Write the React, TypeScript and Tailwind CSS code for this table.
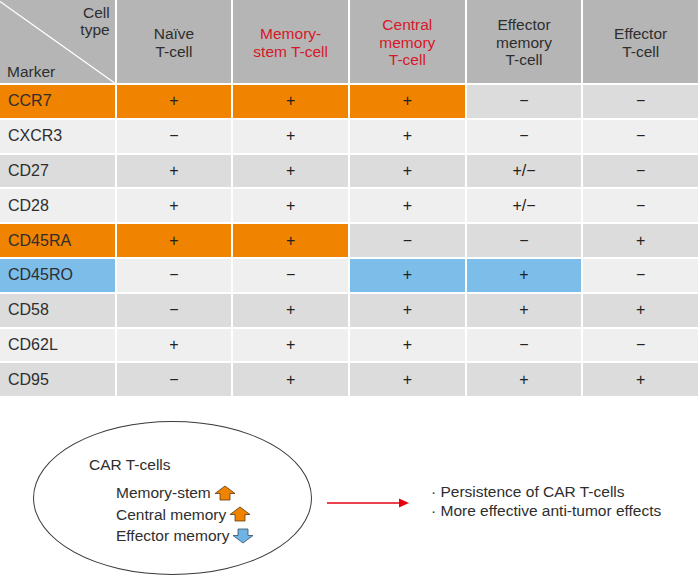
import React from "react";

type Tone = "orange" | "blue" | "light" | "dark";

interface MarkerRow {
  name: string;
  values: string[];
  base: "light" | "dark";
  // tones for [marker, naive, stem, central, effMem, eff]; undefined -> base
  tones?: Partial<Record<number, Tone>>;
}

const ROWS: MarkerRow[] = [
  { name: "CCR7", values: ["+", "+", "+", "−", "−"], base: "dark", tones: { 0: "orange", 1: "orange", 2: "orange", 3: "orange" } },
  { name: "CXCR3", values: ["−", "+", "+", "−", "−"], base: "light" },
  { name: "CD27", values: ["+", "+", "+", "+/−", "−"], base: "dark" },
  { name: "CD28", values: ["+", "+", "+", "+/−", "−"], base: "light" },
  { name: "CD45RA", values: ["+", "+", "−", "−", "+"], base: "dark", tones: { 0: "orange", 1: "orange", 2: "orange" } },
  { name: "CD45RO", values: ["−", "−", "+", "+", "−"], base: "light", tones: { 0: "blue", 3: "blue", 4: "blue" } },
  { name: "CD58", values: ["−", "+", "+", "+", "+"], base: "dark" },
  { name: "CD62L", values: ["+", "+", "+", "−", "−"], base: "light" },
  { name: "CD95", values: ["−", "+", "+", "+", "+"], base: "dark" },
];

const toneClass: Record<Tone, string> = {
  orange: "bg-[#f08300]",
  blue: "bg-[#7dbde9]",
  light: "bg-[#efefef]",
  dark: "bg-[#dcdcdc]",
};

function UpArrow() {
  return (
    <svg width="22" height="16" viewBox="0 0 22 16" className="shrink-0">
      <path
        d="M11 1 L21 8.5 L16 8.5 L16 15 L6 15 L6 8.5 L1 8.5 Z"
        fill="#f08300"
        stroke="#5b3b12"
        strokeWidth="0.8"
        strokeLinejoin="round"
      />
    </svg>
  );
}

function DownArrow() {
  return (
    <svg width="22" height="16" viewBox="0 0 22 16" className="shrink-0">
      <path
        d="M11 15 L21 7.5 L16 7.5 L16 1 L6 1 L6 7.5 L1 7.5 Z"
        fill="#6fb2e4"
        stroke="#34506b"
        strokeWidth="0.8"
        strokeLinejoin="round"
      />
    </svg>
  );
}

export default function App() {
  return (
    <div
      className="w-[698px] h-[578px] bg-white text-[#2e2e2e] overflow-hidden"
      style={{ fontFamily: '"Liberation Sans", Arial, sans-serif' }}
    >
      {/* Marker table */}
      <div className="grid grid-cols-6 gap-x-[2px] gap-y-[2px]">
        {/* Header */}
        <div className="relative h-[83px] bg-[#b5b5b5] flex flex-col justify-between text-[15.5px] leading-[17px]">
          <svg className="absolute inset-0" width="100%" height="100%" viewBox="0 0 115 83" preserveAspectRatio="none">
            <line x1="0" y1="1.5" x2="115" y2="83" stroke="#ffffff" strokeWidth="1.3" />
          </svg>
          <div className="relative text-right pr-[5px] pt-[4px]">
            Cell
            <br />
            type
          </div>
          <div className="relative pl-[7px] pb-[3px]">Marker</div>
        </div>
        <div className="h-[83px] bg-[#b5b5b5] flex items-center justify-center text-center text-[15.5px] leading-[17.5px] pt-[2px]">
          Naïve
          <br />
          T-cell
        </div>
        <div className="h-[83px] bg-[#b5b5b5] flex items-center justify-center text-center text-[15.5px] leading-[17.5px] pt-[2px] text-[#d7182a]">
          Memory-
          <br />
          stem T-cell
        </div>
        <div className="h-[83px] bg-[#b5b5b5] flex items-center justify-center text-center text-[15.5px] leading-[17.5px] pt-[2px] text-[#d7182a]">
          Central
          <br />
          memory
          <br />
          T-cell
        </div>
        <div className="h-[83px] bg-[#b5b5b5] flex items-center justify-center text-center text-[15.5px] leading-[17.5px] pt-[2px]">
          Effector
          <br />
          memory
          <br />
          T-cell
        </div>
        <div className="h-[83px] bg-[#b5b5b5] flex items-center justify-center text-center text-[15.5px] leading-[17.5px] pt-[2px]">
          Effector
          <br />
          T-cell
        </div>

        {/* Body rows */}
        {ROWS.map((row) => (
          <React.Fragment key={row.name}>
            <div
              className={`h-[32.8px] flex items-center pl-[8px] text-[16px] ${toneClass[row.tones?.[0] ?? row.base]}`}
            >
              {row.name}
            </div>
            {row.values.map((v, i) => (
              <div
                key={i}
                className={`h-[32.8px] flex items-center justify-center text-[16px] text-[#222] ${toneClass[row.tones?.[i + 1] ?? row.base]}`}
              >
                {v}
              </div>
            ))}
          </React.Fragment>
        ))}
      </div>

      {/* Summary */}
      <div className="flex items-center pl-[33px] pt-[25px] text-[15.5px] leading-[19px]">
        <div className="w-[279px] h-[154px] shrink-0 rounded-[50%] border border-[#3a3a3a] pl-[55px] pt-[33px]">
          <div>CAR T-cells</div>
          <div className="pl-[27px] pt-[8px] leading-[21.5px]">
            <div className="flex items-center gap-[3px]">
              Memory-stem <UpArrow />
            </div>
            <div className="flex items-center gap-[3px]">
              Central memory <UpArrow />
            </div>
            <div className="flex items-center gap-[3px]">
              Effector memory <DownArrow />
            </div>
          </div>
        </div>
        <svg width="82" height="12" viewBox="0 0 82 12" className="ml-[15px] mt-[10px] shrink-0">
          <line x1="0" y1="6" x2="74" y2="6" stroke="#e50012" strokeWidth="1.6" />
          <polygon points="72,1.5 82,6 72,10.5" fill="#e50012" />
        </svg>
        <div className="ml-[22px] mt-[6px]">
          <div>· Persistence of CAR T-cells</div>
          <div>· More effective anti-tumor effects</div>
        </div>
      </div>
    </div>
  );
}
